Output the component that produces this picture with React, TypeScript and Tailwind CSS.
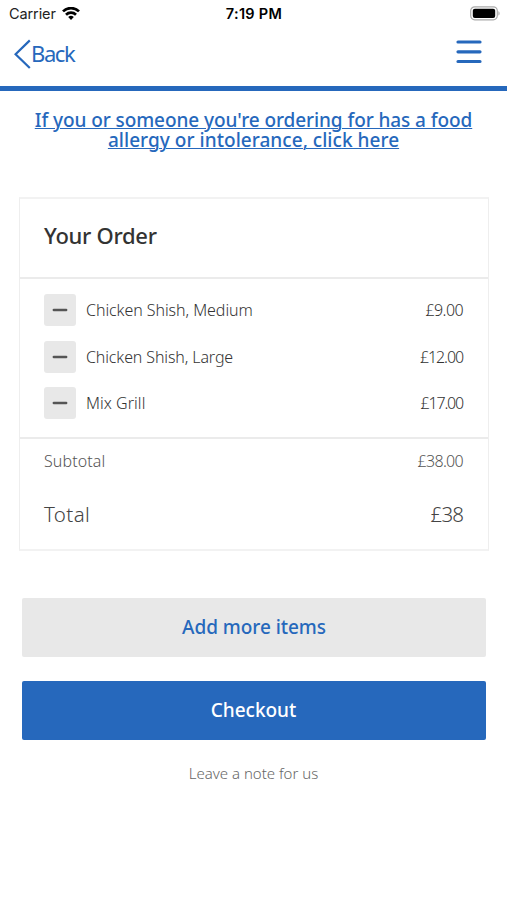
interface OrderItem {
  name: string;
  price: string;
  nameTracking: string;
  priceTracking: string;
}

const items: OrderItem[] = [
  { name: "Chicken Shish, Medium", price: "£9.00", nameTracking: "tracking-[-0.06px]", priceTracking: "tracking-[-0.6px]" },
  { name: "Chicken Shish, Large", price: "£12.00", nameTracking: "tracking-[-0.12px]", priceTracking: "tracking-[-1.1px]" },
  { name: "Mix Grill", price: "£17.00", nameTracking: "tracking-[0.05px]", priceTracking: "tracking-[-1.2px]" },
];

function StatusBar() {
  return (
    <div className="grid h-7 grid-cols-3 items-center pl-[9px] pr-[7px] font-['Inter',sans-serif] text-black">
      <div className="flex items-center gap-[6px]">
        <span className="text-[14.5px] tracking-[-0.1px] text-[#222]">Carrier</span>
        <svg width="18" height="14" viewBox="0 0 18 14" fill="none" stroke="#000" strokeWidth="2.7">
          <path d="M1 4.4a11.4 11.4 0 0 1 16 0" />
          <path d="M4 7.7a7.2 7.2 0 0 1 10 0" />
          <path d="M9 13 6.2 10.1a4.1 4.1 0 0 1 5.6 0Z" fill="#000" stroke="none" />
        </svg>
      </div>
      <span className="pr-px text-center text-[14.5px] font-semibold tracking-[0.3px]">7:19 PM</span>
      <svg className="justify-self-end" width="31" height="16" viewBox="0 0 31 16">
        <rect x="1.7" y="0.8" width="26.6" height="13" rx="4" fill="#fff" stroke="#aaa" strokeWidth="1.2" />
        <rect x="3.8" y="2.7" width="22.4" height="9.2" rx="2" fill="#000" />
        <path d="M29.4 5.2c1.6.6 1.6 3.8 0 4.4Z" fill="#aaa" />
      </svg>
    </div>
  );
}

function Header() {
  return (
    <header className="flex h-[63px] justify-between border-b-[5px] border-[#2668bc] pl-[14px] pr-[25px] text-[#2668bc]">
      <button className="flex h-[51px] items-center">
        <svg width="17" height="30" viewBox="0 0 17 30" fill="none" stroke="currentColor" strokeWidth="2.2">
          <path d="M15.8 1.4 1.6 15.2 15.8 29" />
        </svg>
        <span className="pb-px text-[22px] tracking-[-1.4px]">Back</span>
      </button>
      <button className="flex h-[47px] items-center" aria-label="Menu">
        <svg width="26" height="25" viewBox="0 0 26 25" fill="none" stroke="currentColor" strokeWidth="3.2" strokeLinecap="round">
          <path d="M2 3h22M2 12.8h22M2 22.5h22" />
        </svg>
      </button>
    </header>
  );
}

export default function App() {
  return (
    <div className="h-[900px] w-[507px] overflow-hidden bg-white font-['Noto_Sans',sans-serif]">
      <StatusBar />
      <Header />

      <a
        href="#allergy"
        className="mt-[19px] block text-center text-[19px] leading-5 font-medium text-[#2668bc] underline decoration-1 underline-offset-1"
      >
        <span className="block tracking-[-0.08px]">If you or someone you're ordering for has a food</span>
        <span className="block tracking-[0.04px]">allergy or intolerance, click here</span>
      </a>

      <section className="mt-[47px] mr-[18px] ml-[19px] h-[354px] border-x border-y-2 border-[#eee] border-y-[#f2f2f2]">
        <h1 className="flex h-[80px] items-center border-b-2 border-[#ebebeb] px-6 pb-[6px] text-[22px] font-medium tracking-[-0.3px] text-[#333]">
          Your Order
        </h1>
        <ul className="flex h-[160px] flex-col gap-[14.5px] border-b-2 border-[#ebebeb] pt-[15px] pr-[25px] pl-6">
          {items.map((item) => (
            <li key={item.name} className="flex h-8 items-center text-[16px] font-light text-[#333]">
              <button
                className="mr-[10px] flex size-8 items-center justify-center rounded-[3px] bg-[#e8e8e8]"
                aria-label={`Remove ${item.name}`}
              >
                <svg width="16" height="6" viewBox="0 0 16 6" stroke="#555" strokeWidth="2.4" strokeLinecap="round">
                  <path d="M1.8 3h12.4" />
                </svg>
              </button>
              <span className={item.nameTracking}>{item.name}</span>
              <span className={`ml-auto ${item.priceTracking}`}>{item.price}</span>
            </li>
          ))}
        </ul>
        <div className="flex h-[44px] items-center justify-between pr-[25px] pl-6 text-[16px] font-light text-[#555]">
          <span className="tracking-[0.1px]">Subtotal</span>
          <span className="tracking-[-0.7px]">£38.00</span>
        </div>
        <div className="flex h-[62px] items-center justify-between pr-[25px] pl-6 text-[20.5px] font-light text-[#444]">
          <span className="tracking-[0.4px]">Total</span>
          <span className="tracking-[-0.9px]">£38</span>
        </div>
      </section>

      <div className="mt-[47px] flex flex-col gap-[24px] pr-[21px] pl-[22px]">
        <button className="h-[59px] rounded-[2px] bg-[#e8e8e8] text-[19px] font-medium tracking-[-0.05px] text-[#2668bc]">
          Add more items
        </button>
        <button className="h-[59px] rounded-[2px] bg-[#2668bc] pr-px text-[19px] font-medium text-white">
          Checkout
        </button>
      </div>

      <p className="mt-[21px] text-center text-[15px] leading-6 font-light text-[#666]">Leave a note for us</p>
    </div>
  );
}
